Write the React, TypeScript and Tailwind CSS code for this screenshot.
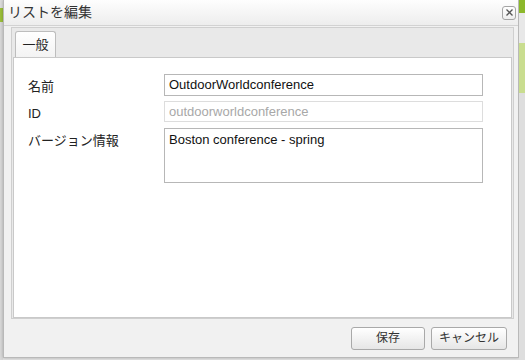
import React from 'react';

const jp = { fontFamily: '"Liberation Sans", "Noto Sans CJK JP", sans-serif' };

const Field: React.FC<{ label: string; children: React.ReactNode }> = ({ label, children }) => (
  <div className="flex items-start">
    <div className="w-[136px] shrink-0 pt-[4px] text-[13px] leading-[18px] text-[#222]">{label}</div>
    {children}
  </div>
);

const App: React.FC = () => {
  return (
    <div className="flex h-[360px] w-[525px] overflow-hidden bg-[#e4e4e4]" style={jp}>
      {/* page behind the dialog */}
      <div className="flex w-[3px] flex-col">
        <div className="h-[8px] bg-[#dcdcdc]"></div>
        <div className="h-[14px] bg-[#9bbf3a]"></div>
        <div className="flex-1 bg-[#d8d8d8]"></div>
      </div>

      <div className="flex h-[358px] w-[516px] flex-col border border-t-0 border-[#b9b9b9] bg-[#f1f1f1] shadow-[0_0_3px_rgba(0,0,0,0.25)]">
        <div className="flex h-[26px] shrink-0 items-center justify-between border-b border-[#d2d2d2] bg-gradient-to-b from-[#fefefe] to-[#ededed] pl-[4px] pr-[2px]">
          <span className="text-[14px] text-[#333]">リストを編集</span>
          <button className="flex h-[14px] w-[14px] items-center justify-center rounded-[3px] border border-[#a5a5a5] bg-gradient-to-b from-white to-[#eeeeee]">
            <svg width="9" height="9" viewBox="0 0 9 9">
              <path d="M1.5 1.5l6 6M7.5 1.5l-6 6" stroke="#555" strokeWidth="1.3" />
            </svg>
          </button>
        </div>

        <div className="flex flex-1 flex-col pl-[7px] pr-[4px] pt-[1px]">
          <div className="flex flex-1 flex-col border border-[#cfcfcf] bg-[#e9e9e9] px-[1px]">
            <div className="flex h-[29px] items-end pl-[2px]">
              <div className="flex h-[26px] w-[41px] items-center justify-center rounded-t-[3px] border border-b-0 border-[#bdbdbd] bg-gradient-to-b from-[#ffffff] to-[#f3f3f3] text-[13px] text-[#222]">
                一般
              </div>
            </div>
            <div className="flex flex-1 flex-col gap-[5px] border border-[#c9c9c9] bg-white pl-[14px] pt-[16px]">
              <Field label="名前">
                <div className="flex h-[22px] w-[319px] items-center border border-[#b7b7b7] bg-white pl-[4px] text-[13px] text-[#111]">
                  OutdoorWorldconference
                </div>
              </Field>
              <Field label="ID">
                <div className="flex h-[21px] w-[319px] items-center border border-[#dddddd] bg-white pl-[4px] text-[13px] text-[#a8a8a8]">
                  outdoorworldconference
                </div>
              </Field>
              <Field label="バージョン情報">
                <div className="h-[55px] w-[319px] border border-[#b7b7b7] bg-white pl-[4px] pt-[2px] text-[13px] leading-[18px] text-[#111]">
                  Boston conference - spring
                </div>
              </Field>
            </div>
          </div>
        </div>

        <div className="flex h-[38px] shrink-0 items-center justify-end gap-[6px] pr-[11px]">
          <button className="h-[23px] w-[74px] rounded-[3px] border border-[#a9a9a9] bg-gradient-to-b from-[#ffffff] to-[#e6e6e6] text-[12px] text-[#333]">
            保存
          </button>
          <button className="h-[23px] w-[76px] rounded-[3px] border border-[#a9a9a9] bg-gradient-to-b from-[#ffffff] to-[#e6e6e6] text-[12px] text-[#333]">
            キャンセル
          </button>
        </div>
      </div>

      <div className="flex flex-1 flex-col">
        <div className="h-[13px] bg-[#8cb82b]"></div>
        <div className="h-[30px] bg-[#e8e8e8]"></div>
        <div className="h-[50px] bg-[#c9dd8f]"></div>
        <div className="flex-1 bg-[#dedede]"></div>
      </div>
    </div>
  );
};

export default App;
